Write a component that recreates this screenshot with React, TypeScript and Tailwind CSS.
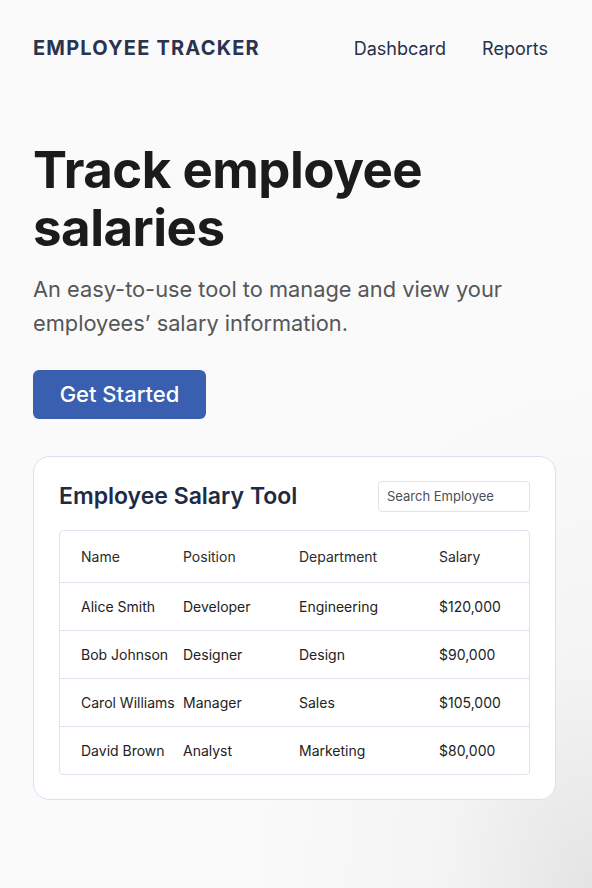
import React from "react";

const rows = [
  ["Alice Smith", "Developer", "Engineering", "$120,000"],
  ["Bob Johnson", "Designer", "Design", "$90,000"],
  ["Carol Williams", "Manager", "Sales", "$105,000"],
  ["David Brown", "Analyst", "Marketing", "$80,000"],
];

export default function App() {
  return (
    <div
      className="w-[592px] h-[888px] overflow-hidden bg-[#fafafa] bg-[radial-gradient(ellipse_at_100%_100%,#e4e4e4_0%,#f4f4f4_18%,#fafafa_40%)]"
      style={{ fontFamily: "Inter, 'Noto Sans', sans-serif" }}
    >
      <header className="flex items-center justify-between pl-[33px] pr-[44px] pt-[36px] h-[60px]">
        <div className="text-[20px] font-bold tracking-[0.06em] text-[#2a3350]">EMPLOYEE TRACKER</div>
        <nav className="flex gap-[36px] text-[18px] text-[#27304a]">
          <span>Dashbcard</span>
          <span>Reports</span>
        </nav>
      </header>

      <section className="px-[33px] pt-[81px]">
        <h1 className="text-[51px] font-bold leading-[58px] tracking-[-0.01em] text-[#1b1b1d]">
          Track employee
          <br />
          salaries
        </h1>
        <p className="mt-[15px] text-[21.8px] leading-[34px] text-[#555659] w-[520px]">
          An easy-to-use tool to manage and view your employees’ salary information.
        </p>
        <button className="mt-[30px] w-[173px] h-[49px] rounded-[6px] bg-[#3a5fb0] text-white text-[22px] font-medium">
          Get Started
        </button>
      </section>

      <section className="mx-[33px] mt-[37px] w-[523px] rounded-[16px] border border-[#d9e1ee] bg-white px-[25px] pt-[22px] pb-[24px]">
        <div className="flex items-center justify-between">
          <h2 className="text-[23px] font-semibold text-[#1f2a46]">Employee Salary Tool</h2>
          <div className="w-[152px] h-[31px] rounded-[4px] border border-[#dde3ec] flex items-center px-[8px] text-[13px] text-[#4b4f57]">
            Search Employee
          </div>
        </div>
        <div className="mt-[16px] rounded-[4px] border border-[#dde3ec] text-[14px] text-[#222]">
          <div className="grid grid-cols-[102px_116px_140px_1fr] pl-[21px] h-[51px] items-center text-[#2b2b2b]">
            <span>Name</span>
            <span>Position</span>
            <span>Department</span>
            <span>Salary</span>
          </div>
          {rows.map((r) => (
            <div
              key={r[0]}
              className="grid grid-cols-[102px_116px_140px_1fr] pl-[21px] h-[48px] items-center border-t border-[#dde3ec]"
            >
              {r.map((c) => (
                <span key={c} className="whitespace-nowrap">{c}</span>
              ))}
            </div>
          ))}
        </div>
      </section>
    </div>
  );
}
